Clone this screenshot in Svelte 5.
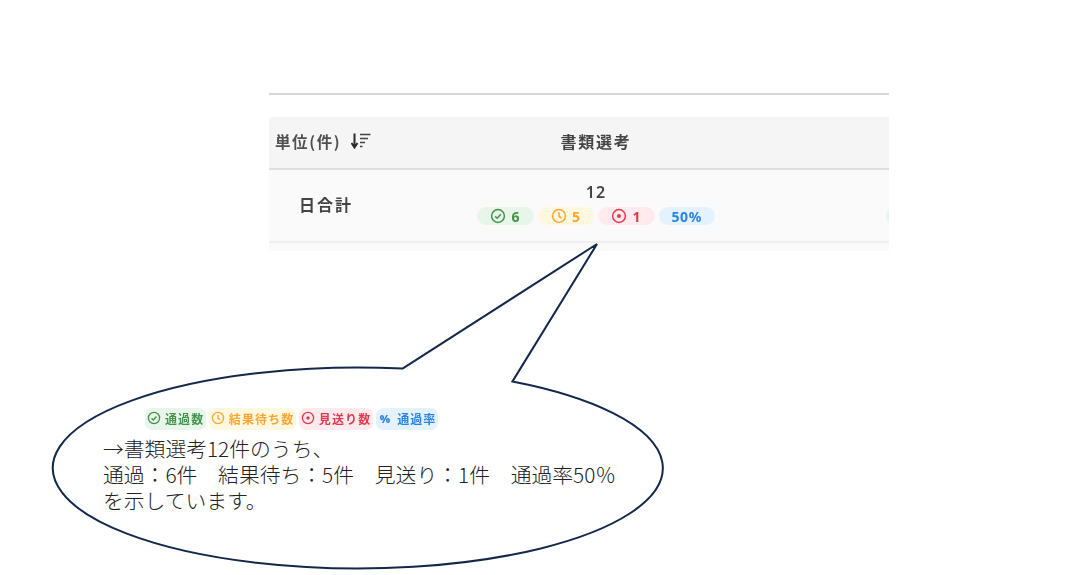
<script>
  const stats = [
    { kind: 'pass', value: '6' },
    { kind: 'wait', value: '5' },
    { kind: 'drop', value: '1' },
    { kind: 'rate', value: '50%' },
  ]
  const legend = [
    { kind: 'pass', label: '通過数' },
    { kind: 'wait', label: '結果待ち数' },
    { kind: 'drop', label: '見送り数' },
    { kind: 'rate', label: '通過率' },
  ]
</script>

{#snippet icon(kind)}
  {#if kind === 'pass'}
    <svg class="ico" viewBox="0 0 16 16"><circle cx="8" cy="8" r="6.4" /><path d="M5.2 8.4l2 1.9 3.6-4" /></svg>
  {:else if kind === 'wait'}
    <svg class="ico" viewBox="0 0 16 16"><circle cx="8" cy="8" r="6.4" /><path d="M8 4.2V8.4l2.6 1.6" /></svg>
  {:else if kind === 'drop'}
    <svg class="ico" viewBox="0 0 16 16"><circle cx="8" cy="8" r="6.4" /><circle class="dot" cx="8" cy="8" r="2" /></svg>
  {/if}
{/snippet}

<main class="page">
  <section class="sheet">
    <div class="row head">
      <div class="unit">
        <span>単位(件)</span>
        <svg class="sort" viewBox="0 0 20 16">
          <path class="arrow" d="M3.5 0.5V14M0.5 10l3 4.5 3-4.5" />
          <path class="lines" d="M9 1.5h10.5M9 5.5h8M9 9.5h5M9 13.5h2.5" />
        </svg>
      </div>
      <div class="col-title">書類選考</div>
      <div></div>
    </div>
    <div class="row body">
      <div class="total">日合計</div>
      <div class="cell">
        <div class="count">12</div>
        <div class="pills">
          {#each stats as s}
            <span class="pill {s.kind}">{@render icon(s.kind)}{s.value}</span>
          {/each}
        </div>
      </div>
      <div class="cell next">
        <div class="count"></div>
        <div class="pills">
          <span class="pill pass"></span>
        </div>
      </div>
    </div>
    <div class="foot"></div>
  </section>

  <aside class="callout">
    <svg class="balloon" viewBox="0 0 1088 575">
      <path d="M402.5 368.6L597 244L512.5 381.4A305 100.5 0 1 1 402.5 368.6Z" />
    </svg>
    <div class="note">
      <div class="legend">
        {#each legend as l}
          <span class="tag {l.kind}">
            {#if l.kind === 'rate'}<b>%</b>{:else}{@render icon(l.kind)}{/if}
            {l.label}
          </span>
        {/each}
      </div>
      <p>→書類選考12件のうち、<br />通過：6件　結果待ち：5件　見送り：1件　通過率50％<br />を示しています。</p>
    </div>
  </aside>
</main>

<style>
  :global(body) {
    background: #fff;
    font-family: "Noto Sans CJK JP", "Noto Sans", sans-serif;
  }

  .page {
    position: relative;
    width: 1088px;
    height: 575px;
    overflow: hidden;
    padding: 93px 0 0 269px;
    box-sizing: border-box;
  }

  .sheet {
    width: 620px;
    overflow: hidden;
    border-top: 2px solid #d6d6d6;
    padding-top: 22px;
    filter: blur(0.55px);
    color: #444;
    font-weight: 700;
  }

  .row {
    display: grid;
    grid-template-columns: 122.5px 409px 1fr;
  }

  .head {
    height: 53px;
    box-sizing: border-box;
    padding-bottom: 3px;
    align-items: center;
    background: #f5f5f5;
    border-bottom: 2px solid #dedede;
    font-size: 16px;
    letter-spacing: 1.8px;
  }

  .unit {
    display: flex;
    align-items: center;
    gap: 10px;
    padding-left: 6px;
    white-space: nowrap;
    font-size: 15.5px;
    letter-spacing: 1.6px;
    color: #505050;
  }

  .sort {
    width: 20px;
    height: 16px;
    flex: none;
    fill: none;
    stroke: #2a2a2a;
    stroke-width: 2;
  }

  .sort .lines {
    stroke: #444;
    stroke-width: 1.7;
  }

  .col-title {
    text-align: center;
  }

  .body {
    height: 71px;
    background: #fafafa;
    border-bottom: 2px solid #efefef;
  }

  .total {
    padding: 22px 0 0 30px;
    font-size: 16px;
    letter-spacing: 2px;
    line-height: 24px;
  }

  .cell {
    display: flex;
    flex-direction: column;
    align-items: center;
    padding-top: 12px;
  }

  .cell.next {
    align-items: flex-start;
    padding-left: 85.5px;
  }

  .count {
    height: 20px;
    font-family: "Noto Sans", sans-serif;
    font-size: 16px;
    font-weight: 600;
    line-height: 20px;
    letter-spacing: 1px;
  }

  .pills {
    display: flex;
    gap: 4px;
    margin-top: 5px;
  }

  .pill {
    display: flex;
    align-items: center;
    justify-content: center;
    gap: 5px;
    width: 56.5px;
    height: 18px;
    border-radius: 9px;
    font-family: "Noto Sans", sans-serif;
    font-size: 14px;
    font-weight: 700;
    letter-spacing: 0.6px;
    background: var(--bg);
    color: var(--fg);
  }

  .pass { --bg: #e8f5e9; --fg: #43944b; }
  .wait { --bg: #fff8e1; --fg: #ffa632; }
  .drop { --bg: #ffebee; --fg: #de3b50; }
  .rate { --bg: #e3f2fd; --fg: #2a84e0; }

  .ico {
    width: 16px;
    height: 16px;
    flex: none;
    fill: none;
    stroke: var(--fg);
    stroke-width: 1.5;
  }

  .ico .dot {
    fill: var(--fg);
    stroke: none;
  }

  .foot {
    height: 8px;
    background: #fafafa;
  }

  .callout {
    position: absolute;
    inset: 0;
  }

  .balloon {
    position: absolute;
    inset: 0;
    width: 1088px;
    height: 575px;
    fill: #fff;
    stroke: #14284b;
    stroke-width: 2;
  }

  .note {
    position: relative;
    padding: 408px 0 0 103px;
    color: #222;
  }

  .legend {
    display: flex;
    gap: 2.5px;
    margin-left: 42px;
    filter: blur(0.55px);
  }

  .tag {
    display: flex;
    align-items: center;
    gap: 4px;
    height: 22px;
    box-sizing: border-box;
    padding: 0 2px 2px;
    border-radius: 7px;
    font-size: 12px;
    font-weight: 700;
    letter-spacing: 1.1px;
    white-space: nowrap;
    background: var(--bg);
    color: var(--fg);
  }

  .tag b {
    font-family: "Noto Sans", sans-serif;
    font-size: 11px;
    letter-spacing: 0;
    margin: 0 3px 0 2px;
  }

  .tag .ico {
    width: 14px;
    height: 14px;
  }

  p {
    margin: 5px 0 0;
    font-size: 20.8px;
    line-height: 26px;
    font-weight: 300;
    white-space: nowrap;
  }
</style>
